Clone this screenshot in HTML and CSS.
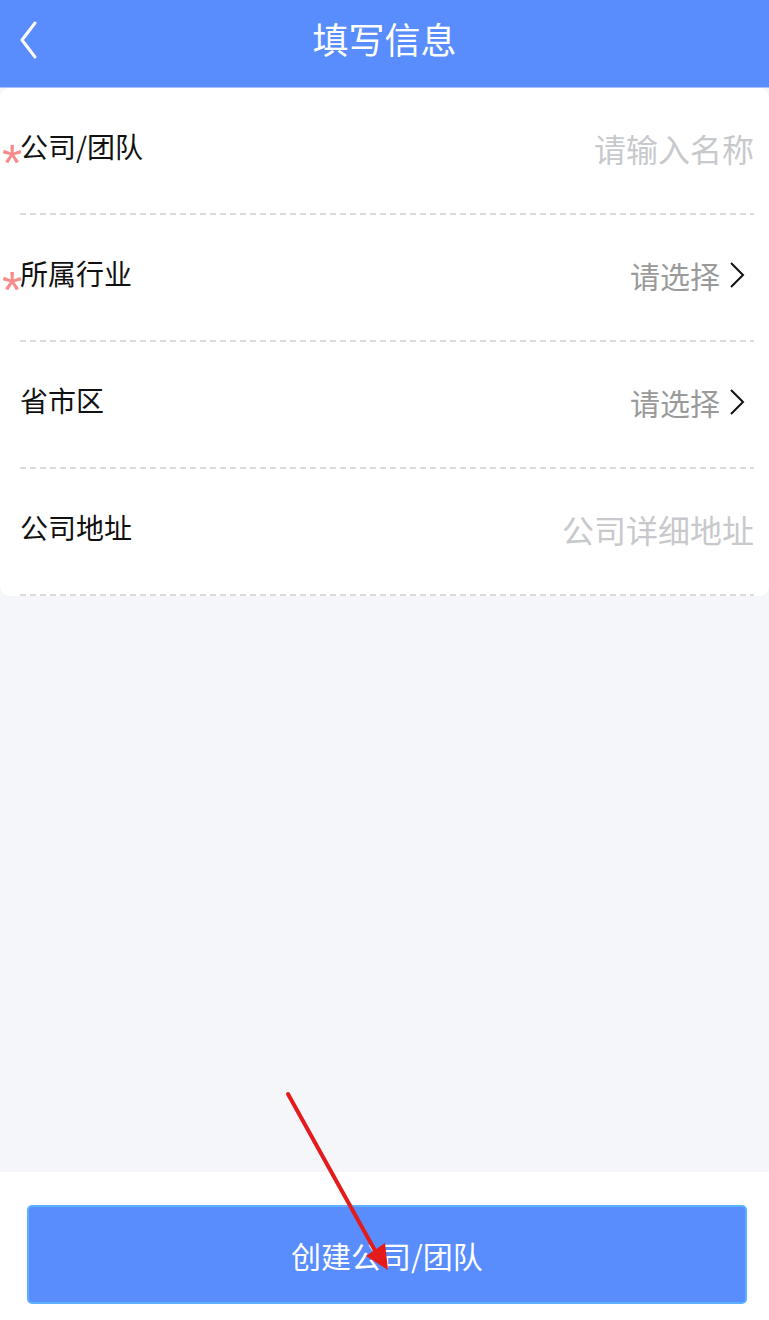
FILE: index.html
```html
<!DOCTYPE html>
<html lang="zh-CN">
<head>
  <meta charset="UTF-8">
  <meta name="viewport" content="width=device-width, initial-scale=1.0">
  <title>填写信息</title>
  <link rel="stylesheet" href="styles.css">
</head>
<body>
  <div class="page">
    <header class="nav">
      <a class="nav-back" href="#">
        <svg width="20" height="40" viewBox="0 0 20 40"><polyline points="16,3 3,20 16,37" fill="none" stroke="#fff" stroke-width="3" stroke-linecap="round" stroke-linejoin="round"/></svg>
      </a>
      <h1>填写信息</h1>
    </header>

    <main class="form">
      <div class="row">
        <span class="label required">公司/团队</span>
        <span class="placeholder">请输入名称</span>
      </div>
      <div class="row">
        <span class="label required">所属行业</span>
        <span class="picker">请选择
          <svg width="18" height="28" viewBox="0 0 18 28"><polyline points="3,2 15,14 3,26" fill="none" stroke="#111" stroke-width="2"/></svg>
        </span>
      </div>
      <div class="row">
        <span class="label">省市区</span>
        <span class="picker">请选择
          <svg width="18" height="28" viewBox="0 0 18 28"><polyline points="3,2 15,14 3,26" fill="none" stroke="#111" stroke-width="2"/></svg>
        </span>
      </div>
      <div class="row">
        <span class="label">公司地址</span>
        <span class="placeholder">公司详细地址</span>
      </div>
    </main>

    <div class="spacer"></div>

    <footer class="footer">
      <button class="submit" type="button">创建公司/团队</button>
    </footer>

    <!-- annotation arrow over the screenshot -->
    <svg class="mark" width="769" height="1320" viewBox="0 0 769 1320">
      <line x1="288" y1="1094" x2="378" y2="1256" stroke="#e31b1b" stroke-width="4" stroke-linecap="round"/>
      <polygon points="366,1256 385,1243 388,1270" fill="#e31b1b"/>
    </svg>
  </div>
</body>
</html>
```

FILE: styles.css
```css
body {
  margin: 0;
  font-family: "Noto Sans CJK SC", "Noto Sans", sans-serif;
  background: #f5f6fa;
}
.page {
  position: relative;
  width: 769px;
  min-height: 1320px;
  display: flex;
  flex-direction: column;
  background: #f5f6fa;
}
.nav {
  height: 87px;
  background: #598dfe;
  border-bottom: 1px solid #a8c2ff;
  display: flex;
  align-items: center;
  justify-content: center;
  position: relative;
}
.nav-back {
  position: absolute;
  left: 19px;
  top: 20px;
  display: flex;
}
.nav h1 {
  margin: 0;
  color: #fff;
  font-size: 36px;
  font-weight: normal;
  line-height: 1;
  margin-top: -12px;
}
.form {
  background: #fff;
  border-radius: 10px;
}
.row {
  height: 125px;
  margin: 0 15px 0 20px;
  display: flex;
  align-items: center;
  justify-content: space-between;
  background: repeating-linear-gradient(to right, #dcdcdc 0 6px, transparent 6px 10px) bottom left / 100% 2px no-repeat;
  padding-bottom: 2px;
}
.label {
  position: relative;
  font-size: 28px;
  color: #111;
  margin-top: -9px;
}
.required::before {
  content: "*";
  position: absolute;
  left: -18px;
  top: 11px;
  font-family: "Liberation Sans", sans-serif;
  font-size: 52px;
  line-height: 1;
  color: #f88a8a;
}
.placeholder {
  font-size: 32px;
  color: #c8c9cc;
  margin-top: -6px;
}
.picker {
  font-size: 30px;
  color: #9a9a9a;
  display: flex;
  align-items: center;
  gap: 8px;
  padding-right: 8px;
  margin-top: -6px;
}
.spacer {
  flex: 1;
}
.footer {
  height: 148px;
  background: #fff;
  padding: 33px 22px 0 27px;
  box-sizing: border-box;
}
.submit {
  width: 720px;
  height: 99px;
  border: 2px solid #5cb0ff;
  border-radius: 5px;
  background: #598dfe;
  color: #fff;
  font-family: inherit;
  font-size: 30px;
}
.mark {
  position: absolute;
  left: 0;
  top: 0;
  pointer-events: none;
}
```
